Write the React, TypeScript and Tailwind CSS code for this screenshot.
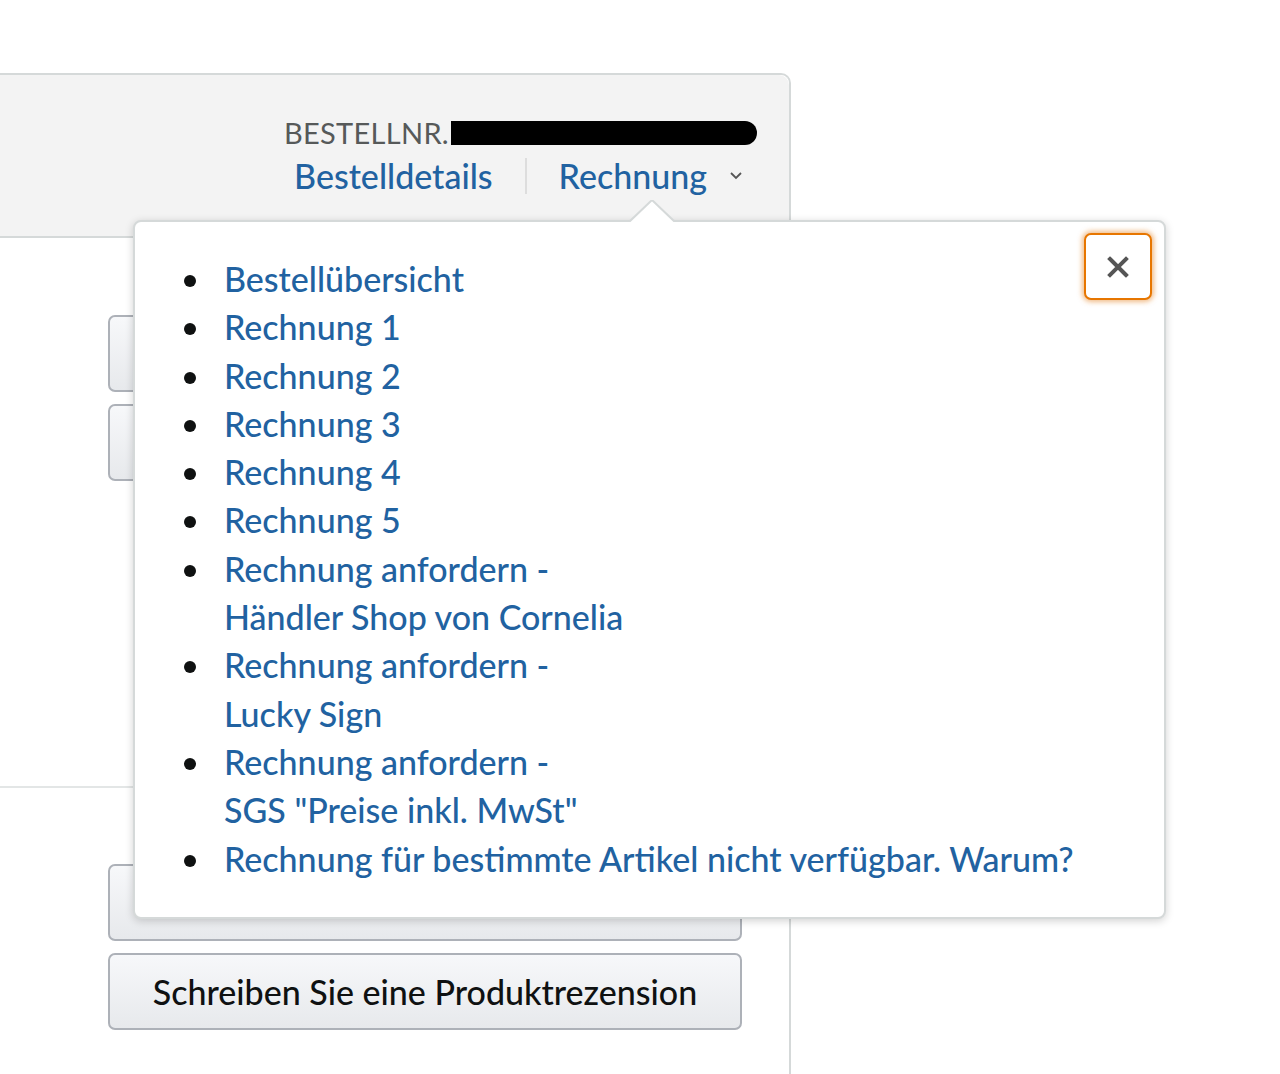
import React from 'react';

const items: string[][] = [
  ['Bestellübersicht'],
  ['Rechnung 1'],
  ['Rechnung 2'],
  ['Rechnung 3'],
  ['Rechnung 4'],
  ['Rechnung 5'],
  ['Rechnung anfordern -', 'Händler Shop von Cornelia'],
  ['Rechnung anfordern -', 'Lucky Sign'],
  ['Rechnung anfordern -', 'SGS "Preise inkl. MwSt"'],
  ['Rechnung für bestimmte Artikel nicht verfügbar. Warum?'],
];

function GrayButton({ label }: { label?: string }) {
  return (
    <div className="flex h-[77px] w-[634px] shrink-0 items-center justify-center rounded-[7px] border-2 border-[#adb1b8] bg-gradient-to-b from-[#f7f8fa] to-[#e7e9ec] text-[34px] font-medium text-[#0f1111]">
      {label}
    </div>
  );
}

export default function App(): JSX.Element {
  return (
    <div className="relative flex h-[1074px] w-[1280px] flex-col overflow-hidden bg-white pt-[73px] font-['Lato','Noto_Sans',sans-serif]">
      <div className="flex w-[791px] flex-1 flex-col rounded-tr-[10px] border-r-2 border-t-2 border-[#d5d9d9]">
        {/* header */}
        <div className="flex h-[163px] flex-col items-end rounded-tr-[10px] border-b-2 border-[#d5d9d9] bg-[#f3f3f3] pr-[32px] pt-[43px]">
          <div className="flex items-center text-[29px] leading-none tracking-[0.3px] text-[#565959]">
            <span>BESTELLNR.</span>
            <span className="ml-[2px] h-[24px] w-[306px] rounded-r-full rounded-l-[4px] bg-black" />
          </div>
          <div className="mr-[11px] mt-[11px] flex items-center text-[34px] font-medium leading-none text-[#2162a1]">
            <span>Bestelldetails</span>
            <span className="mx-[32px] h-[36px] w-[2px] bg-[#dddddd]" />
            <span>Rechnung</span>
            <svg className="ml-[22px] mr-[3px]" width="14" height="10" viewBox="0 0 14 10">
              <path d="M2 2 L7 7 L12 2" fill="none" stroke="#555" strokeWidth="1.8" />
            </svg>
          </div>
        </div>
        {/* body */}
        <div className="flex flex-col gap-[12px] pl-[108px] pt-[77px]">
          <GrayButton />
          <GrayButton />
        </div>
        <div className="mt-[305px] border-t-2 border-[#e3e6e6]" />
        <div className="flex flex-1 flex-col gap-[12px] pl-[108px] pt-[76px]">
          <GrayButton />
          <GrayButton label="Schreiben Sie eine Produktrezension" />
        </div>
      </div>

      {/* popover */}
      <div className="absolute left-[133px] top-[220px] h-[699px] w-[1033px] rounded-[8px] border-2 border-[#d5d9d9] bg-white shadow-[0_2px_8px_rgba(0,0,0,0.18)]">
        <svg className="absolute left-[493px] top-[-22px]" width="48" height="24" viewBox="0 0 48 24">
          <path d="M0 23 L24 0 L48 23" fill="white" stroke="#d5d9d9" strokeWidth="2" />
          <rect x="0" y="22" width="48" height="3" fill="white" />
        </svg>
        <button className="absolute right-[12px] top-[11px] flex h-[67px] w-[68px] items-center justify-center rounded-[7px] border-2 border-[#e77600] bg-white shadow-[0_0_5px_2px_rgba(228,121,17,0.5)]">
          <svg width="22" height="22" viewBox="0 0 22 22">
            <path d="M3 3 L19 19 M19 3 L3 19" stroke="#555" strokeWidth="4" strokeLinecap="square" />
          </svg>
        </button>
        <ul className="pl-[89px] pt-[33px] text-[34px] font-medium leading-[48.3px] text-[#2162a1]">
          {items.map((lines, i) => (
            <li key={i} className="relative">
              <span className="absolute left-[-40px] top-[20px] h-[12px] w-[12px] rounded-full bg-[#0f1111]" />
              {lines.map((l, j) => (
                <div key={j}>{l}</div>
              ))}
            </li>
          ))}
        </ul>
      </div>
    </div>
  );
}
